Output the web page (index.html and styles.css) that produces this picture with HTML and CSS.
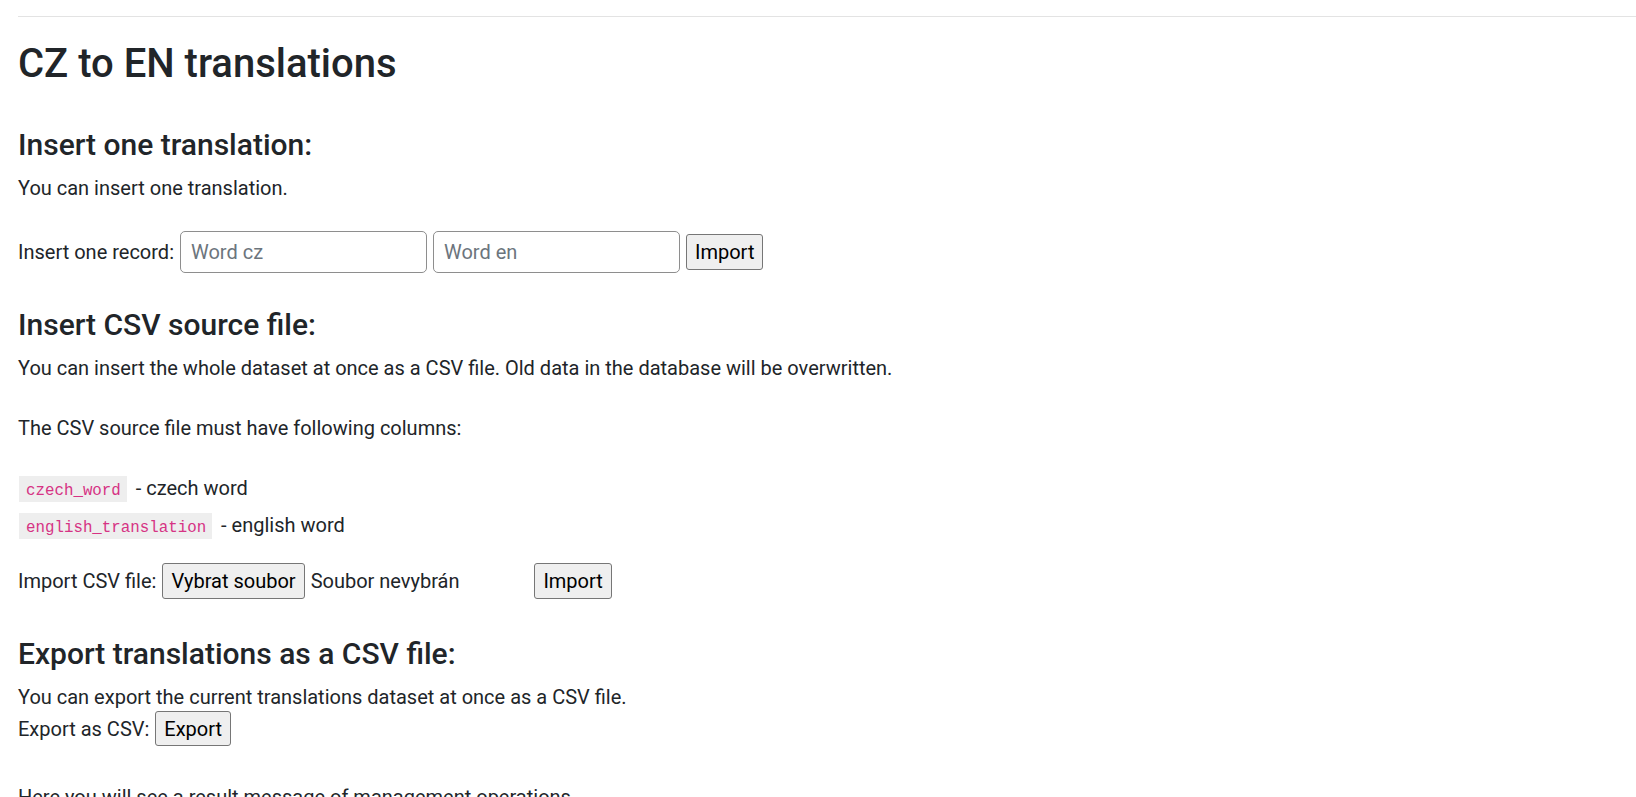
FILE: index.html
```html
<!DOCTYPE html>
<html lang="en">
<head>
<meta charset="utf-8">
<title>CZ to EN translations</title>
<link rel="stylesheet" href="styles.css">
</head>
<body>
<div class="page">
  <div class="rule"></div>
  <h1 class="title">CZ to EN translations</h1>

  <h2 class="section-title first">Insert one translation:</h2>
  <p class="section-text">You can insert one translation.</p>
  <div class="form-row record-row">
    <span class="label">Insert one record:</span>
    <input class="text-input" type="text" placeholder="Word cz">
    <input class="text-input" type="text" placeholder="Word en">
    <button class="btn" type="button">Import</button>
  </div>

  <h2 class="section-title">Insert CSV source file:</h2>
  <p class="section-text">You can insert the whole dataset at once as a CSV file. Old data in the database will be overwritten.</p>
  <p class="section-text spaced">The CSV source file must have following columns:</p>
  <div class="column-row first-col"><code class="code">czech_word</code> - czech word</div>
  <div class="column-row second-col"><code class="code">english_translation</code> - english word</div>
  <div class="form-row csv-row">
    <span class="label">Import CSV file:</span>
    <span class="file-input">
      <button class="btn" type="button">Vybrat soubor</button>
      <span class="file-name">Soubor nevybrán</span>
    </span>
    <button class="btn" type="button">Import</button>
  </div>

  <h2 class="section-title export-title">Export translations as a CSV file:</h2>
  <p class="section-text">You can export the current translations dataset at once as a CSV file.</p>
  <div class="form-row export-row">
    <span class="label">Export as CSV:</span>
    <button class="btn" type="button">Export</button>
  </div>

  <p class="result-text">Here you will see a result message of management operations.</p>
</div>
</body>
</html>
```

FILE: styles.css
```css
html, body {
  margin: 0;
  padding: 0;
  background: #ffffff;
}

body {
  font-family: Roboto, "Liberation Sans", sans-serif;
  font-size: 20px;
  line-height: 30px;
  color: #212529;
  overflow: hidden;
}

.page {
  padding: 0 0 0 18px;
}

.rule {
  height: 1px;
  background: #e3e3e3;
  margin-top: 16px;
}

.title {
  font-size: 40px;
  line-height: 48px;
  font-weight: 500;
  margin: 23px 0 0;
}

.section-title {
  font-size: 30px;
  line-height: 36px;
  font-weight: 500;
  margin: 34px 0 0;
}

.section-title.first {
  margin-top: 39px;
}

.section-title.export-title {
  margin-top: 37px;
}

.section-text {
  margin: 10px 0 0;
}

.section-text.spaced {
  margin-top: 30px;
}

.form-row {
  display: flex;
  align-items: center;
  gap: 6px;
}

.record-row {
  margin-top: 28px;
  height: 42px;
}

.csv-row {
  margin-top: 23px;
  height: 36px;
}

.export-row {
  margin-top: -1px;
  height: 35px;
}

.label {
  white-space: nowrap;
}

.text-input {
  box-sizing: border-box;
  width: 247px;
  height: 42px;
  margin: 0;
  padding: 0 10px;
  border: 1px solid #8e8e8e;
  border-radius: 5px;
  font-family: Roboto, "Liberation Sans", sans-serif;
  font-size: 20px;
  color: #212529;
  background: #ffffff;
}

.text-input::placeholder {
  color: #6c757d;
}

.btn {
  box-sizing: border-box;
  height: 36px;
  margin: 0;
  padding: 0 8px;
  border: 1px solid #767676;
  border-radius: 3px;
  background: #efefef;
  color: #000000;
  font-family: Roboto, "Liberation Sans", sans-serif;
  font-size: 20px;
  line-height: 34px;
}

.export-row .btn {
  height: 35px;
}

.file-input {
  display: inline-flex;
  align-items: center;
  gap: 6px;
  width: 366px;
}

.file-name {
  white-space: nowrap;
}

.column-row {
  height: 30px;
}

.column-row.first-col {
  margin-top: 30px;
}

.column-row.second-col {
  margin-top: 7px;
}

.code {
  display: inline-block;
  margin-left: 1px;
  margin-right: 4px;
  padding: 5px 6px 1px 7px;
  line-height: 20px;
  font-family: "Liberation Mono", "DejaVu Sans Mono", monospace;
  font-size: 15.8px;
  color: #d63384;
  background: #eeeeee;
}

.result-text {
  margin: 36px 0 0;
}
```
